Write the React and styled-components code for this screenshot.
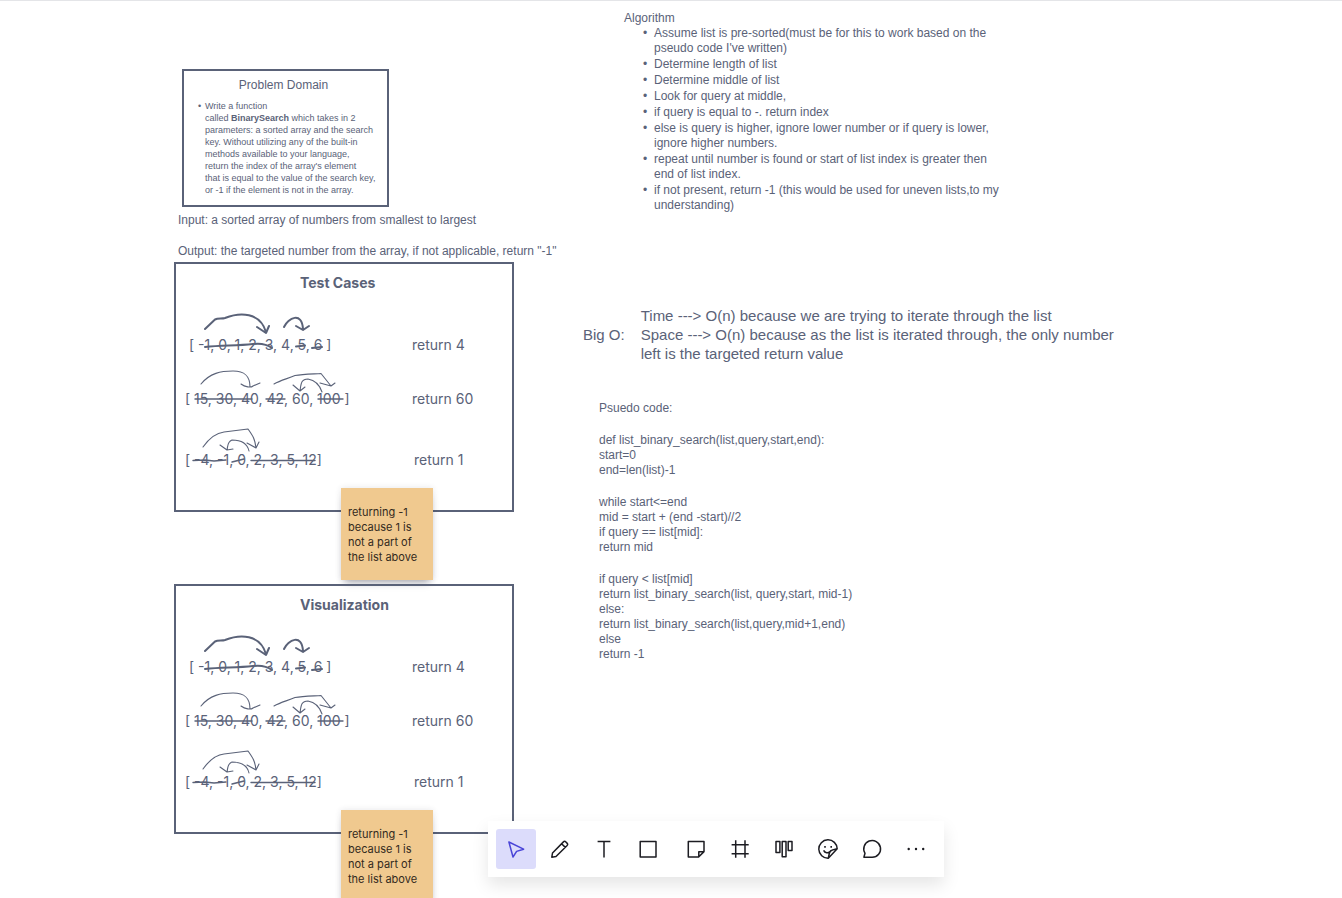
import React from "react";
import styled, { createGlobalStyle } from "styled-components";

const INK = "#5a6278";

const GlobalStyle = createGlobalStyle`
  * { box-sizing: border-box; }
  body { margin: 0; background: #fff; font-family: "Liberation Sans", Arial, sans-serif; color: ${INK}; }
  p, h1, h2, ul, ol { margin: 0; padding: 0; font-weight: 400; }
`;

const Board = styled.main`
  position: relative;
  display: flex;
  gap: 69px;
  height: 100vh;
  padding-left: 174px;
  overflow: hidden;
  border-top: 1px solid #e4e5e8;
`;

const CaseColumn = styled.div`
  flex: 0 0 340px;
  min-width: 0;
  display: flex;
  flex-direction: column;
  padding-top: 68px;
`;

const NotesColumn = styled.div`
  flex: 1;
  display: flex;
  flex-direction: column;
  padding-top: 10px;
`;

const Text = styled.p`
  font-size: 12px;
  line-height: 15px;
  white-space: pre;
`;

const Bullets = styled.ul`
  display: flex;
  flex-direction: column;
  gap: ${(p) => p.$gap || 0}px;
  padding-left: ${(p) => p.$indent}px;
  list-style: none;
  font-size: ${(p) => p.$size || 12}px;
  line-height: ${(p) => p.$line || 15}px;
  white-space: pre;
`;

const Bullet = styled.li`
  display: flex;
  &::before {
    content: "•";
    width: ${(p) => p.$hang}px;
  }
`;

const DomainCard = styled.section`
  width: 207px;
  height: 138px;
  margin-left: 8px;
  padding: 6px 0 0 12px;
  border: 2px solid ${INK};
`;

const DomainTitle = styled.h2`
  padding-right: 16px;
  margin-bottom: 7px;
  font-size: 12px;
  line-height: 16px;
  text-align: center;
`;

const Contract = styled.section`
  display: flex;
  flex-direction: column;
  gap: 16px;
  padding: 6px 0 3px 4px;
`;

const Panels = styled.div`
  display: flex;
  flex-direction: column;
  gap: 72px;
`;

const Frame = styled.section`
  position: relative;
  flex: none;
  height: 250px;
  padding: 9px 8px 0 9px;
  border: 2px solid ${INK};
  font-family: Inter, "Liberation Sans", sans-serif;
  font-size: 14px;
  line-height: 20px;
`;

const FrameTitle = styled.h2`
  padding-left: 115px;
  margin-bottom: 42px;
  font-size: 14px;
  line-height: 20px;
  font-weight: 700;
`;

const CaseList = styled.ol`
  display: flex;
  flex-direction: column;
  gap: 34px;
  list-style: none;
`;

const CaseRow = styled.li`
  display: grid;
  grid-template-columns: 227px 1fr;
  white-space: pre;
  &:first-child span:first-child { padding-left: 4px; }
  &:last-child { padding-top: 7px; }
  &:last-child span:last-child { padding-left: 2px; }
`;

const Ink = styled.svg`
  position: absolute;
  left: -2px;
  top: -2px;
  fill: none;
  stroke: ${INK};
  stroke-width: 1.1;
  stroke-linecap: round;
  stroke-linejoin: round;
`;

const Sticky = styled.aside`
  position: absolute;
  left: 165px;
  top: 224px;
  width: 92px;
  height: 92px;
  padding: 17px 0 0 7px;
  background: #f0c98f;
  color: #33291d;
  font-size: 11px;
  line-height: 15px;
  white-space: pre;
  box-shadow: 0 6px 8px -4px rgba(40, 40, 60, 0.4), 0 0 6px rgba(40, 40, 60, 0.12);
`;

const Algorithm = styled.section`
  padding-left: 41px;
`;

const BigO = styled.section`
  display: flex;
  align-items: center;
  gap: 16px;
  margin-top: 93px;
  font-size: 15px;
  line-height: 19px;
  white-space: pre;
`;

const BigOTitle = styled.h2`
  font-size: 15px;
  line-height: 19px;
`;

const CodeStack = styled.section`
  display: flex;
  flex-direction: column;
  gap: 17px;
  margin-top: 38px;
  padding-left: 16px;
`;

const Dock = styled.div`
  position: absolute;
  left: 90px;
  right: 0;
  bottom: 21px;
  display: flex;
  justify-content: center;
`;

const Toolbar = styled.nav`
  display: flex;
  gap: 4px;
  padding: 8px;
  background: #fff;
  box-shadow: 0 8px 16px rgba(0, 0, 0, 0.1);
`;

const Tool = styled.button`
  display: grid;
  place-items: center;
  width: 40px;
  height: 40px;
  margin: 0 ${(p) => (p.$spaced ? 4 : 0)}px 0 0;
  padding: 0;
  border: 0;
  border-radius: 3px;
  background: ${(p) => (p.$active ? "#dcdcfb" : "transparent")};
  color: ${(p) => (p.$active ? "#4a45d8" : "#1c1c22")};
`;

const Glyph = styled.svg`
  width: 24px;
  height: 24px;
  fill: none;
  stroke: currentColor;
  stroke-width: 1.5;
  stroke-linejoin: round;
`;

const cases = [
  { list: "[ -1, 0, 1, 2, 3, 4, 5, 6 ]", result: "return 4" },
  { list: "[ 15, 30, 40, 42, 60, 100 ]", result: "return 60" },
  { list: "[ -4, -1, 0, 2, 3, 5, 12]", result: "return 1" },
];

const tools = [
  { name: "Select", active: true, icon: <path d="M4.9 5 19.6 12.2 12.6 14.4 9 20Z" /> },
  {
    name: "Pen",
    icon: <path d="M3.8 20.2 4.5 16 15.2 5.1C16.2 4.1 17 4.1 17.9 5L19 6.1C19.9 7 19.9 7.8 18.9 8.8L8 19.5ZM13.6 6.7 17.3 10.4" />,
  },
  { name: "Text", icon: <path d="M5.6 4.5H18.4M12 4.5V20.4" /> },
  { name: "Shape", spaced: true, icon: <path d="M4.2 4.4H20V20H4.2Z" /> },
  { name: "Sticky note", icon: <path d="M4.3 4.4H20V14.6L14.6 20H4.3ZM14.8 20V14.8H20" /> },
  { name: "Frame", icon: <path d="M7.7 3.3V20.7M17 3.3V20.7M3.6 7.7H20.7M3.6 16.7H20.7" /> },
  { name: "Kanban", icon: <path d="M4 4.4H7.9V15.6H4ZM10.2 4.4H14V19.8H10.2ZM16.2 4.4H20V13.6H16.2Z" /> },
  {
    name: "Sticker",
    icon: (
      <>
        <path d="M21.2 11.8A9.2 9.2 0 1 0 12.3 21.2L21.2 11.8C18 12.5 16.5 12.7 14.5 14C13 16 13 18 12.3 21.2M7.6 13.4C9 16.2 12 16.6 14 14.6" />
        <path d="M8.2 9.8H9.8M14.4 9.8H16" strokeWidth="1.8" />
      </>
    ),
  },
  { name: "Comment", icon: <path d="M12.2 20.3H3.9L5 16.3A8.4 8.4 0 1 1 12.2 20.3Z" /> },
  {
    name: "More",
    icon: <path d="M4.7 12h.01M12 12h.01M19.2 12h.01" strokeWidth="2.4" strokeLinecap="round" />,
  },
];

function CasePanel({ title }) {
  return (
    <Frame>
      <FrameTitle>{title}</FrameTitle>
      <CaseList>
        {cases.map((c) => (
          <CaseRow key={c.result}>
            <span>{c.list}</span>
            <span>{c.result}</span>
          </CaseRow>
        ))}
      </CaseList>
      <Ink width="340" height="250" viewBox="0 1 340 250">
        <g strokeWidth="2">
          <path d="M31 68 41 58.5C44 57 48 58 51 57C66 51 86 51 92 71M83 66 92 72 95 65" />
          <path d="M110 66C114 57 128 50 129 68M122 65 129 69 135 65" />
          <path d="M31 86C48 84 62 85 79 83C87 82 94 84 98 87M122 85.5 131 84.5M138 87 148 86" />
        </g>
        <path d="M27 123C36 112 47 110 59 110C71 110 76 115 76 126M67 123C71 126 77 127 79 125L86 122" />
        <path d="M100 123C107 119 113 118 121 114.5C129 113 139 113 147 112.5L157 125M146 122 157 125 161 122" />
        <path d="M148 131C145 122 140 119 134 118C127 118 127 123 126 130M119 124 126 130 131 126" />
        <path d="M21 138H78M92 138H111M144 138H169" strokeWidth="1.4" />
        <path d="M29 186C34 179 41 172 50 171L74 168C79 175 81 178 82 187M73 182 82 187 85 181" />
        <path d="M75 190C73 181 66 179 58 179C53 181 54 185 53 189M46 184 53 189 59 188" />
        <path d="M19 199.5 31 199 40 200 52 199M58 201 70 198M77 199.5H141" strokeWidth="1.4" />
      </Ink>
      <Sticky>{"returning -1\nbecause 1 is\nnot a part of\nthe list above"}</Sticky>
    </Frame>
  );
}

const domainLines = [
  "Write a function",
  <>called <b>BinarySearch</b> which takes in 2</>,
  "parameters: a sorted array and the search",
  "key. Without utilizing any of the built-in",
  "methods available to your language,",
  "return the index of the array's element",
  "that is equal to the value of the search key,",
  "or -1 if the element is not in the array.",
];

const steps = [
  "Assume list is pre-sorted(must be for this to work based on the\npseudo code I've written)",
  "Determine length of list",
  "Determine middle of list",
  "Look for query at middle,",
  "if query is equal to -. return index",
  "else is query is higher, ignore lower number or if query is lower,\nignore higher numbers.",
  "repeat until number is found or start of list index is greater then\nend of list index.",
  "if not present, return -1 (this would be used for uneven lists,to my\nunderstanding)",
];

const code = [
  "Psuedo code:",
  "def list_binary_search(list,query,start,end):\nstart=0\nend=len(list)-1",
  "while start<=end\nmid = start + (end -start)//2\nif query == list[mid]:\nreturn mid",
  "if query < list[mid]\nreturn list_binary_search(list, query,start, mid-1)\nelse:\nreturn list_binary_search(list,query,mid+1,end)\nelse\nreturn -1",
];

export default function App() {
  return (
    <Board>
      <GlobalStyle />
      <CaseColumn>
        <DomainCard>
          <DomainTitle>Problem Domain</DomainTitle>
          <Bullets $indent={2} $size={9} $line={12}>
            <Bullet $hang={7}>
              <div>
                {domainLines.map((line, i) => (
                  <div key={i}>{line}</div>
                ))}
              </div>
            </Bullet>
          </Bullets>
        </DomainCard>
        <Contract>
          <Text>Input: a sorted array of numbers from smallest to largest</Text>
          <Text>Output: the targeted number from the array, if not applicable, return "-1"</Text>
        </Contract>
        <Panels>
          <CasePanel title="Test Cases" />
          <CasePanel title="Visualization" />
        </Panels>
      </CaseColumn>
      <NotesColumn>
        <Algorithm>
          <Text as="h2">Algorithm</Text>
          <Bullets $indent={19} $gap={1}>
            {steps.map((s) => (
              <Bullet key={s} $hang={11}>{s}</Bullet>
            ))}
          </Bullets>
        </Algorithm>
        <BigO>
          <BigOTitle>Big O:</BigOTitle>
          <p>
            {"Time ---> O(n) because we are trying to iterate through the list\nSpace ---> O(n) because as the list is iterated through, the only number\nleft is the targeted return value"}
          </p>
        </BigO>
        <CodeStack>
          {code.map((block) => (
            <Text key={block}>{block}</Text>
          ))}
        </CodeStack>
      </NotesColumn>
      <Dock>
        <Toolbar aria-label="Drawing tools">
          {tools.map((t) => (
            <Tool key={t.name} type="button" aria-label={t.name} $active={t.active} $spaced={t.spaced}>
              <Glyph viewBox="0 0 24 24">{t.icon}</Glyph>
            </Tool>
          ))}
        </Toolbar>
      </Dock>
    </Board>
  );
}
